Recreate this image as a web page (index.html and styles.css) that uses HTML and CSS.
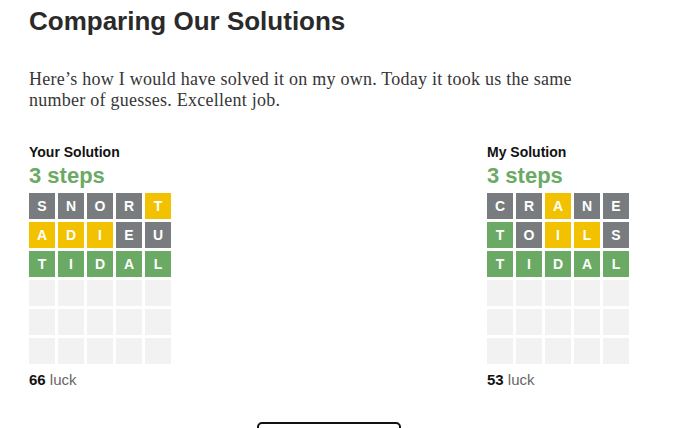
FILE: index.html
```html
<!DOCTYPE html>
<html lang="en">
<head>
    <meta charset="UTF-8">
    <meta name="viewport" content="width=device-width, initial-scale=1.0">
    <title>Comparing Our Solutions</title>
    <link rel="stylesheet" href="styles.css">
</head>

<body>

    <div class="page">
        <h1>Comparing Our Solutions</h1>
        <p class="intro">Here’s how I would have solved it on my own. Today it took us the same number of guesses. Excellent job.</p>

        <div class="solutions">
            <div class="solution">
                <h3>Your Solution</h3>
                <div class="steps">3 steps</div>
                <div class="board">
                    <div class="tile absent">S</div>
                    <div class="tile absent">N</div>
                    <div class="tile absent">O</div>
                    <div class="tile absent">R</div>
                    <div class="tile present">T</div>

                    <div class="tile present">A</div>
                    <div class="tile present">D</div>
                    <div class="tile present">I</div>
                    <div class="tile absent">E</div>
                    <div class="tile absent">U</div>

                    <div class="tile correct">T</div>
                    <div class="tile correct">I</div>
                    <div class="tile correct">D</div>
                    <div class="tile correct">A</div>
                    <div class="tile correct">L</div>

                    <div class="tile"></div><div class="tile"></div><div class="tile"></div><div class="tile"></div><div class="tile"></div>
                    <div class="tile"></div><div class="tile"></div><div class="tile"></div><div class="tile"></div><div class="tile"></div>
                    <div class="tile"></div><div class="tile"></div><div class="tile"></div><div class="tile"></div><div class="tile"></div>
                </div>
                <div class="luck"><b>66</b> luck</div>
            </div>

            <div class="solution">
                <h3>My Solution</h3>
                <div class="steps">3 steps</div>
                <div class="board">
                    <div class="tile absent">C</div>
                    <div class="tile absent">R</div>
                    <div class="tile present">A</div>
                    <div class="tile absent">N</div>
                    <div class="tile absent">E</div>

                    <div class="tile correct">T</div>
                    <div class="tile absent">O</div>
                    <div class="tile present">I</div>
                    <div class="tile present">L</div>
                    <div class="tile absent">S</div>

                    <div class="tile correct">T</div>
                    <div class="tile correct">I</div>
                    <div class="tile correct">D</div>
                    <div class="tile correct">A</div>
                    <div class="tile correct">L</div>

                    <div class="tile"></div><div class="tile"></div><div class="tile"></div><div class="tile"></div><div class="tile"></div>
                    <div class="tile"></div><div class="tile"></div><div class="tile"></div><div class="tile"></div><div class="tile"></div>
                    <div class="tile"></div><div class="tile"></div><div class="tile"></div><div class="tile"></div><div class="tile"></div>
                </div>
                <div class="luck"><b>53</b> luck</div>
            </div>
        </div>

        <div class="actions">
            <button class="btn">Continue</button>
        </div>
    </div>

</body>
</html>
```

FILE: styles.css
```css
body {
    margin: 0;
    background: #ffffff;
    color: #121212;
    font-family: "Liberation Sans", Arial, sans-serif;
}
.page {
    width: 600px;
    padding: 5px 0 0 29px;
}
h1 {
    margin: 0;
    font-size: 26px;
    line-height: 32px;
    font-weight: 700;
    color: #2a2a2a;
}
.intro {
    width: 560px;
    margin: 32px 0 0 0;
    font-family: "Liberation Serif", "Times New Roman", serif;
    font-size: 18px;
    line-height: 21px;
    letter-spacing: 0.25px;
    color: #363636;
}
.solutions {
    display: flex;
    justify-content: space-between;
    margin-top: 32px;
}
h3 {
    margin: 0 0 2px 0;
    font-size: 14px;
    line-height: 18px;
    font-weight: 700;
    color: #121212;
}
.steps {
    font-size: 22px;
    line-height: 26px;
    font-weight: 700;
    color: #6aaa64;
    margin-bottom: 4px;
}
.board {
    display: grid;
    grid-template-columns: repeat(5, 26px);
    grid-auto-rows: 26px;
    gap: 3px;
}
.tile {
    background: #f2f2f2;
    color: #ffffff;
    font-size: 14px;
    font-weight: 700;
    display: flex;
    align-items: center;
    justify-content: center;
}
.absent {
    background: #787c7e;
}
.present {
    background: #f2c200;
}
.correct {
    background: #6aaa64;
}
.luck {
    margin-top: 7px;
    font-size: 15px;
    line-height: 18px;
    color: #666666;
}
.luck b {
    color: #121212;
}
.actions {
    display: flex;
    justify-content: center;
    margin-top: 33px;
}
.btn {
    width: 144px;
    height: 44px;
    border: 2px solid #121212;
    border-radius: 5px;
    background: #ffffff;
    font-family: "Liberation Sans", Arial, sans-serif;
    font-size: 14px;
    font-weight: 700;
}
```
